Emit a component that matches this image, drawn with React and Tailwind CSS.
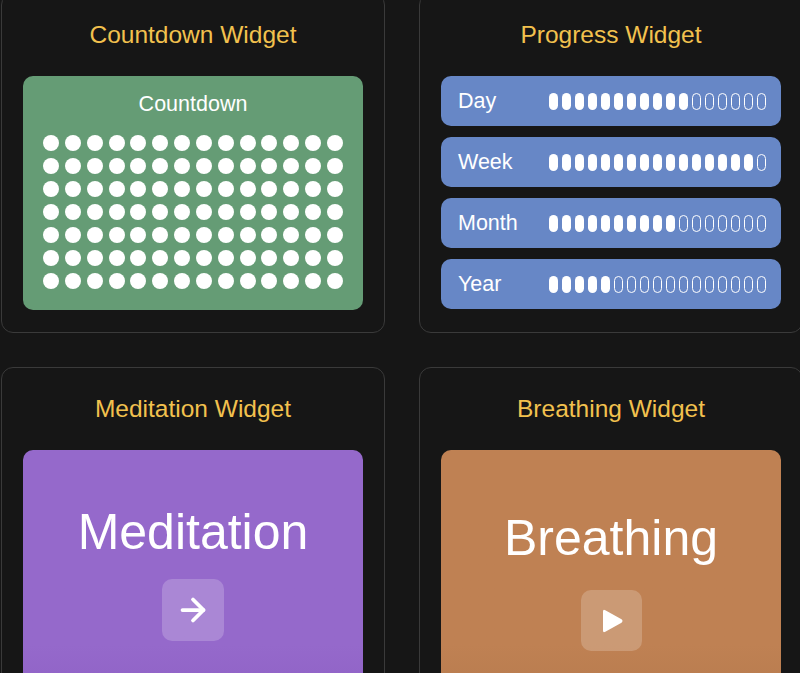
import React from 'react';
import { ArrowRight } from 'lucide-react';

const progress = [
  { label: 'Day', filled: 11 },
  { label: 'Week', filled: 16 },
  { label: 'Month', filled: 10 },
  { label: 'Year', filled: 5 },
];

function WidgetCard({ title, children }) {
  return (
    <div className="w-[384px] rounded-[12px] border border-[#3a3a3a] bg-[#161616] px-[21px] pt-[25px] pb-[22px]">
      <p className="text-center text-[24.5px] leading-[32px] font-medium text-[#f2c14e]">{title}</p>
      <div className="mt-[25px]">{children}</div>
    </div>
  );
}

function Countdown() {
  const rows = Array.from({ length: 7 });
  const cols = Array.from({ length: 14 });
  return (
    <div className="h-[234px] rounded-[10px] bg-[#659c75] px-[20px] pt-[14px]">
      <p className="text-center text-[21.5px] leading-[28px] text-white">Countdown</p>
      <div className="mt-[17px] flex flex-col gap-[7px]">
        {rows.map((_, r) => (
          <div key={r} className="flex justify-between">
            {cols.map((_, c) => (
              <span key={c} className="h-[16px] w-[16px] rounded-full bg-white" />
            ))}
          </div>
        ))}
      </div>
    </div>
  );
}

function Progress() {
  return (
    <div className="flex flex-col gap-[11px]">
      {progress.map(({ label, filled }) => (
        <div key={label} className="flex h-[50px] items-center rounded-[10px] bg-[#6787c6] pl-[17px] pr-[15px]">
          <span className="w-[93px] text-[21.5px] text-white">{label}</span>
          <div className="flex gap-[4px]">
            {Array.from({ length: 17 }).map((_, i) =>
              i < filled ? (
                <span key={i} className="h-[17px] w-[9px] rounded-full bg-white" />
              ) : (
                <span key={i} className="h-[17px] w-[9px] rounded-full border-[1.5px] border-white" />
              )
            )}
          </div>
        </div>
      ))}
    </div>
  );
}

export default function App() {
  return (
    <div className="h-[673px] overflow-hidden bg-[#161616] font-['Liberation_Sans',Arial,sans-serif]">
      <div className="mt-[-7px] ml-px grid w-[802px] grid-cols-[384px_384px] gap-x-[34px] gap-y-[34px]">
        <WidgetCard title="Countdown Widget">
          <Countdown />
        </WidgetCard>
        <WidgetCard title="Progress Widget">
          <Progress />
        </WidgetCard>
        <WidgetCard title="Meditation Widget">
          <div className="flex h-[260px] flex-col items-center rounded-[10px] bg-gradient-to-b from-[#9569cb] from-75% to-[#8e60c4] pt-[53px]">
            <p className="text-[50px] leading-[58px] text-white">Meditation</p>
            <div className="mt-[18px] flex h-[62px] w-[62px] items-center justify-center rounded-[10px] bg-white/20">
              <ArrowRight size={36} strokeWidth={2.5} color="white" />
            </div>
          </div>
        </WidgetCard>
        <WidgetCard title="Breathing Widget">
          <div className="flex h-[260px] flex-col items-center rounded-[10px] bg-gradient-to-b from-[#bf8153] from-75% to-[#b67a4d] pt-[59px]">
            <p className="text-[50px] leading-[58px] text-white">Breathing</p>
            <div className="mt-[23px] flex h-[61px] w-[61px] items-center justify-center rounded-[10px] bg-white/20">
              <svg width="22" height="26" viewBox="0 0 22 26" className="ml-[3px]">
                <path d="M1 3.5 Q1 1 3.3 2.3 L19.5 11.3 Q21.5 13 19.5 14.7 L3.3 23.7 Q1 25 1 22.5 Z" fill="white" />
              </svg>
            </div>
          </div>
        </WidgetCard>
      </div>
    </div>
  );
}
